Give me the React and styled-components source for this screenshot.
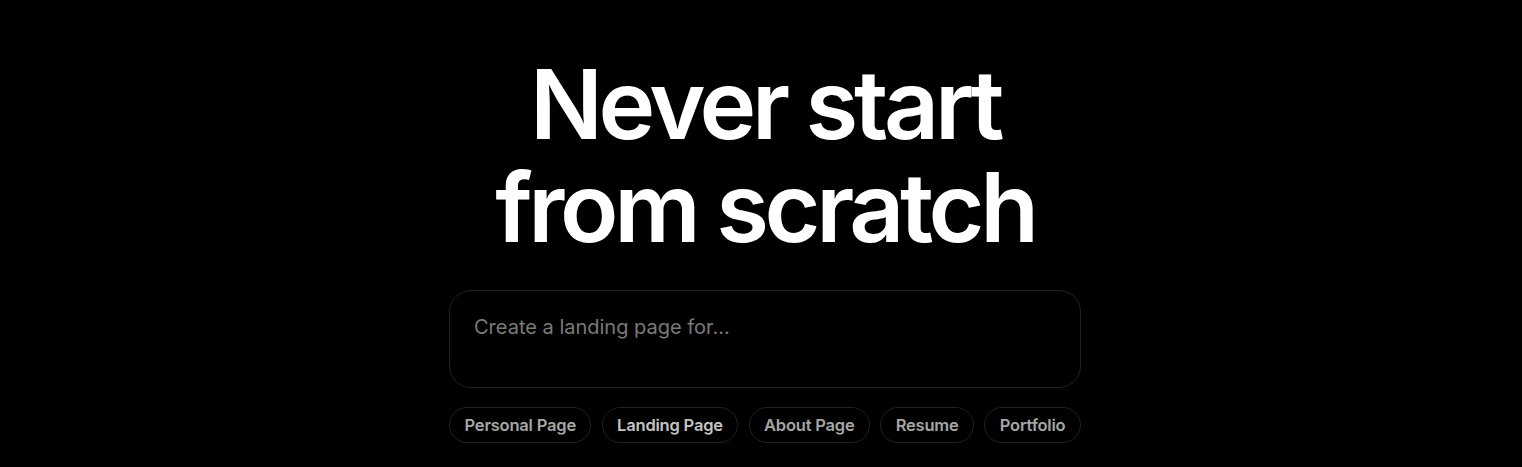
import React from 'react'
import styled, { createGlobalStyle } from 'styled-components'

const GlobalStyle = createGlobalStyle`
  html, body {
    margin: 0;
    padding: 0;
    background: #000;
  }
  body {
    font-family: Inter, 'Noto Sans', sans-serif;
    color: #fff;
  }
`

const chips = ['Personal Page', 'Landing Page', 'About Page', 'Resume', 'Portfolio']

export default function App() {
  return (
    <>
      <GlobalStyle />
      <StyledPage>
        <StyledHero>
          <StyledTitle>
            Never start
            <br />
            from scratch
          </StyledTitle>
          <StyledPrompt placeholder="Create a landing page for..." />
          <StyledChipRow>
            {chips.map((c) => (
              <StyledChip key={c} $active={c === 'Landing Page'}>
                {c}
              </StyledChip>
            ))}
          </StyledChipRow>
        </StyledHero>
      </StyledPage>
    </>
  )
}

const StyledPage = styled.div`
  width: 100%;
  height: 467px;
  background: #000;
  display: flex;
  justify-content: center;
  padding-left: 8px;
  box-sizing: border-box;
  overflow: hidden;
`

const StyledHero = styled.div`
  width: 632px;
  display: flex;
  flex-direction: column;
  align-items: center;
  padding-top: 53px;
`

const StyledTitle = styled.h1`
  margin: 0;
  font-family: Inter, 'Noto Sans', sans-serif;
  font-weight: 600;
  font-size: 96px;
  line-height: 103px;
  letter-spacing: -4.3px;
  text-align: center;
  color: #fff;
  white-space: nowrap;
`

const StyledPrompt = styled.textarea`
  margin-top: 31px;
  width: 100%;
  height: 98px;
  box-sizing: border-box;
  background: #000;
  border: 1px solid #232323;
  border-radius: 22px;
  padding: 22px 24px;
  resize: none;
  outline: none;
  color: #ddd;
  font-family: Inter, 'Noto Sans', sans-serif;
  font-size: 20px;
  line-height: 28px;

  &::placeholder {
    color: #7a7a7a;
  }
`

const StyledChipRow = styled.div`
  margin-top: 19px;
  width: 100%;
  display: flex;
  justify-content: space-between;
`

const StyledChip = styled.button`
  height: 36px;
  padding: 0 14.5px;
  background: #000;
  border: 1px solid #222;
  border-radius: 18px;
  font-family: Inter, 'Noto Sans', sans-serif;
  font-weight: 600;
  font-size: 16.5px;
  letter-spacing: -0.2px;
  color: ${(p) => (p.$active ? '#c4c4c4' : '#a6a6a6')};
  cursor: pointer;
`
